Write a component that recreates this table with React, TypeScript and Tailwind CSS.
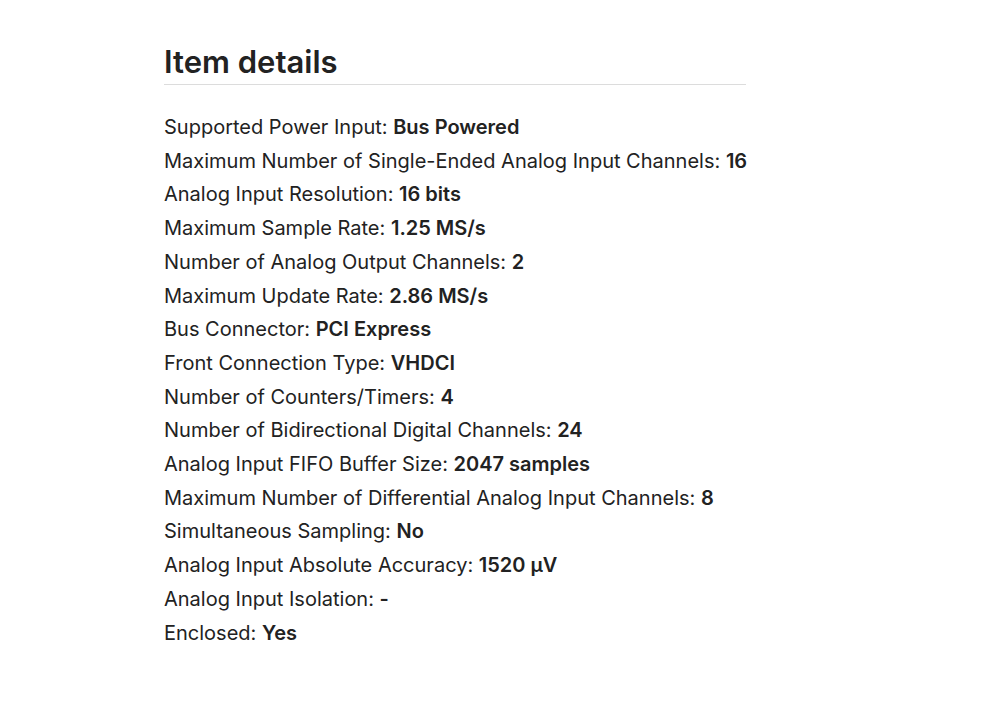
const specs: [string, string][] = [
  ["Supported Power Input", "Bus Powered"],
  ["Maximum Number of Single-Ended Analog Input Channels", "16"],
  ["Analog Input Resolution", "16 bits"],
  ["Maximum Sample Rate", "1.25 MS/s"],
  ["Number of Analog Output Channels", "2"],
  ["Maximum Update Rate", "2.86 MS/s"],
  ["Bus Connector", "PCI Express"],
  ["Front Connection Type", "VHDCI"],
  ["Number of Counters/Timers", "4"],
  ["Number of Bidirectional Digital Channels", "24"],
  ["Analog Input FIFO Buffer Size", "2047 samples"],
  ["Maximum Number of Differential Analog Input Channels", "8"],
  ["Simultaneous Sampling", "No"],
  ["Analog Input Absolute Accuracy", "1520 µV"],
  ["Analog Input Isolation", "-"],
  ["Enclosed", "Yes"],
];

export default function App() {
  return (
    <div className="w-[1000px] h-[710px] bg-white font-['Inter',sans-serif] text-[#222]">
      <div className="ml-[164px] w-[582px] pt-[42px]">
        {/* Heading */}
        <h2 className="text-[31px] font-semibold leading-[40px] pb-[2px] border-b border-[#dcdcdc]">
          Item details
        </h2>

        {/* Spec list */}
        <ul className="mt-[26px] text-[20px] leading-[33.7px]">
          {specs.map(([label, value], i) => (
            <li key={i} className="whitespace-nowrap">
              {label}: <span className="font-semibold">{value}</span>
            </li>
          ))}
        </ul>
      </div>
    </div>
  );
}
